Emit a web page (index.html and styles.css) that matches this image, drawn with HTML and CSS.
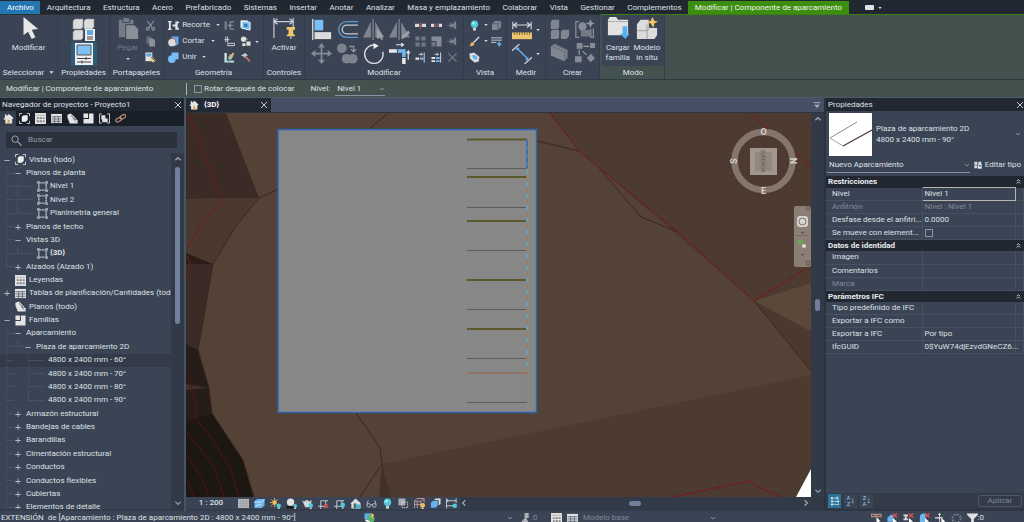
FILE: index.html
```html
<!DOCTYPE html>
<html lang="es">
<head>
<meta charset="utf-8">
<title>Proyecto1 - Vista 3D</title>
<link rel="stylesheet" href="styles.css">
</head>
<body>
<svg class="defs" aria-hidden="true">
  <defs>
    <symbol id="cursor" viewBox="0 0 24 24"><path d="M6 0v20l5-4 4 8 4-2-4-8 7-1z" fill="#e8e8e8"/></symbol>
    <symbol id="types" viewBox="0 0 24 24"><g fill="#dcdcdc" stroke="#8b8f96" stroke-width=".6"><path d="M1 3l2-2h8v8l-2 2H1zM12 3l2-2h8v8l-2 2h-8zM1 14l2-2h8v8l-2 2H1z"/></g><path d="M13 11h10v12H13z" fill="#eee"/><path d="M15 12h6v5h-6z" fill="#5fa9e6"/><path d="M15 19h6M15 21h6" stroke="#444"/></symbol>
    <symbol id="props" viewBox="0 0 24 24"><path d="M3 1h18v22H3z" fill="#f0f0f0"/><path d="M5 3h14v10H5z" fill="#7fc0f5" stroke="#555"/><path d="M5 16.500h14M5 20h14M14 15v3M10 18.500v3" stroke="#444" fill="none"/></symbol>
    <symbol id="paste" viewBox="0 0 24 24"><path d="M2 3h5V1h6v2h5v5h-9v14H2z" fill="#757c86"/><path d="M10 9h9l4 4v11H10z" fill="#8a9098"/><path d="M6 3v3h8V3" stroke="#3b4454" fill="none"/></symbol>
    <symbol id="cut" viewBox="0 0 24 24"><g fill="none" stroke="#8a9098" stroke-width="2.500"><path d="M5 2l11 15M19 2L8 17"/><circle cx="6" cy="19" r="3"/><circle cx="18" cy="19" r="3"/></g></symbol>
    <symbol id="copyc" viewBox="0 0 24 24"><path d="M3 1h9l3 3v13H3z" fill="#676e7a"/><path d="M9 6h9l4 4v13H9z" fill="#8a9098"/></symbol>
    <symbol id="match" viewBox="0 0 24 24"><path d="M1 1h15v19H1z" fill="#e4e4e4"/><path d="M3 3h11v7H3z" fill="#5fa9e6"/><path d="M8 17l8-6 7 7-4 5z" fill="#e8cf92"/><path d="M14 11l7 8" stroke="#444" stroke-width="2"/></symbol>
    <symbol id="cope" viewBox="0 0 24 24"><path d="M0 2h8v3H6v14h2v3H0v-3h2V5H0zM10 10h6V3h8v4h-3v10h3v4h-8v-7h-6z" fill="#e4e4e4"/></symbol>
    <symbol id="cutg" viewBox="0 0 24 24"><path d="M7 1h16v15l-6 6z" fill="#63aaf0"/><circle cx="9" cy="14" r="8.500" fill="#dcdcdc"/><path d="M3 8a8 8 0 0 1 14 7" stroke="#b24c4c" stroke-width="2" fill="none"/></symbol>
    <symbol id="join" viewBox="0 0 24 24"><path d="M8 1h15v15h-6a8.500 8.500 0 1 1-9-9z" fill="#76bdf6"/></symbol>
    <symbol id="wallj" viewBox="0 0 24 24"><path d="M1 3h6v18H1z" fill="#70777f"/><path d="M22 4h-8v16h8M20 12h-9m4-4l-5 4 5 4" fill="none" stroke="#858c95" stroke-width="2.500"/></symbol>
    <symbol id="beam" viewBox="0 0 24 24"><path d="M4 1v13m4-13v13M1 8h11M8 16h15v5H8z" stroke="#dadada" stroke-width="2" fill="none"/></symbol>
    <symbol id="splitf" viewBox="0 0 24 24"><path d="M1 1h16v16H1z" fill="#e7e7e7"/><path d="M4 2l18 3v17L4 18z" fill="#76bdf6" stroke="#fff" stroke-width="2"/><path d="M9 8h7v8l-7-2z" fill="#3775ab"/></symbol>
    <symbol id="shapes" viewBox="0 0 24 24"><circle cx="8" cy="7" r="6" fill="#dfdfdf"/><path d="M14 12h9v9h-9zM5 16h7v6H5z" fill="#dfdfdf"/><path d="M9 13l9-8" stroke="#999" stroke-width="2"/></symbol>
    <symbol id="paintw" viewBox="0 0 24 24"><path d="M1 2h5v17h16v4H1z" fill="#e0e0e0"/><path d="M8 13l6-9 7 4-7 11z" fill="#6fb8ef"/><path d="M12 15L21 2" stroke="#edb34e" stroke-width="4"/><path d="M4 17l9 5" stroke="#59c0cb" stroke-width="3"/></symbol>
    <symbol id="hammer" viewBox="0 0 24 24"><path d="M2 8l9-6 6 5-7 6-3-4z" fill="#c8cbd0"/><path d="M11 9l11 12" stroke="#ba7361" stroke-width="4"/></symbol>
    <symbol id="activate" viewBox="0 0 24 24"><path d="M1 1v22M22 1v10M1 5h21M5 2L1 5l4 3M18 2l4 3-4 3" stroke="#c9ced6" fill="none" stroke-width="1.300"/><path d="M15 11h9v3h-2v4l2 2v1h-9v-1l2-2v-4h-2z" fill="#f1c568"/><path d="M19.500 21v3" stroke="#eee"/></symbol>
    <symbol id="align" viewBox="0 0 24 24"><path d="M2 0v24" stroke="#ddd" stroke-width="1.500"/><path d="M4 1h10v12H4z" fill="#78c0f8"/><path d="M4 15h19v8H4z" fill="#dcdcdc"/></symbol>
    <symbol id="offset" viewBox="0 0 24 24"><path d="M24 3H11a9 9 0 0 0 0 18h13" fill="none" stroke="#589bd3" stroke-width="1.600"/><path d="M24 7H11a5 5 0 0 0 0 10h13" fill="none" stroke="#c7c9ce" stroke-width="1.600"/></symbol>
    <symbol id="mirror1" viewBox="0 0 24 24"><path d="M9 3v18H0zM14 3v18h10z" fill="#7e858e"/><path d="M11.500 0v24" stroke="#9da2aa"/><path d="M16 11v12l3-2 2 3 2-1-2-3h3z" fill="#9ca1a8"/></symbol>
    <symbol id="mirror2" viewBox="0 0 24 24"><path d="M9 3v18H0zM14 3v18h10z" fill="#7e858e"/><path d="M11.500 0v24" stroke="#9da2aa"/><path d="M14 23l1-4 7-6 2 3-7 6z" fill="#9ca1a8"/></symbol>
    <symbol id="move" viewBox="0 0 24 24"><path d="M12 0l4 5h-3v6h6V8l5 4-5 4v-3h-6v6h3l-4 5-4-5h3v-6H5v3l-5-4 5-4v3h6V5H8z" fill="#858c96"/></symbol>
    <symbol id="copym" viewBox="0 0 24 24"><g fill="#7c838d"><circle cx="5.500" cy="6" r="5.500"/><circle cx="11" cy="18" r="5.500"/><circle cx="18" cy="18" r="5.500"/></g><path d="M14 4h5v5m-3-2l3 3 3-3" stroke="#8d939c" stroke-width="1.500" fill="none"/></symbol>
    <symbol id="rotate" viewBox="0 0 24 24"><path d="M14 2.500A10.500 10.500 0 1 0 22.500 10" fill="none" stroke="#d8dbe0" stroke-width="1.600"/><path d="M12 0l6 3-6 4z" fill="#eee"/></symbol>
    <symbol id="trim" viewBox="0 0 24 24"><path d="M0 7h9v4H0zM15 17h4v7h-4z" fill="#e6e6e6"/><path d="M10 7h9v9h-4v-5h-5z" fill="#70b9f4"/><path d="M8 2h8m-2-2l2.500 2L14 4M22 19v-9m-2 2l2-3 2 3" stroke="#e5e5e5" fill="none" stroke-width="1.400"/></symbol>
    <symbol id="split1" viewBox="0 0 24 24"><path d="M0 8h9v7H0zM15 8h9v7h-9z" fill="#d5d8dc"/><path d="M12 4v16M9 12h6" stroke="#c75959" stroke-width="2"/></symbol>
    <symbol id="split2" viewBox="0 0 24 24"><path d="M0 8h7v7H0zM17 8h7v7h-7z" fill="#d5d8dc"/><path d="M9 7h2v9H9zM14 7h2v9h-2z" fill="#c75959"/></symbol>
    <symbol id="unpin" viewBox="0 0 24 24"><path d="M1 12h6M8 6v12M9 9h7V5l3-1v15l-3-1v-4H9z" stroke="#7f8690" stroke-width="2" fill="#7f8690"/></symbol>
    <symbol id="array" viewBox="0 0 24 24"><path d="M1 1h9v9H1zM14 1h9v9h-9zM1 14h9v9H1zM14 14h9v9h-9z" fill="#727984"/></symbol>
    <symbol id="scale" viewBox="0 0 24 24"><path d="M1 1h22v22H12V11H1z" fill="#858c96"/><path d="M1 13h9v10H1z" fill="#6e7580"/></symbol>
    <symbol id="ext1" viewBox="0 0 24 24"><path d="M1 12h8v5H1z" fill="#e4e4e4"/><path d="M11 12h7v5h-7z" fill="#70b9f4"/><path d="M20 1v22M8 5h8m-3-3l3 3-3 3" stroke="#dfe1e4" stroke-width="2" fill="none"/></symbol>
    <symbol id="ext2" viewBox="0 0 24 24"><path d="M1 11h8v4H1zM1 18h8v4H1z" fill="#e4e4e4"/><path d="M11 11h8v4h-8zM11 18h8v4h-8z" fill="#70b9f4"/><path d="M21 1v22M8 5h8m-3-3l3 3-3 3" stroke="#dfe1e4" stroke-width="2" fill="none"/></symbol>
    <symbol id="del" viewBox="0 0 24 24"><path d="M3 3l18 18M21 3L3 21" stroke="#727984" stroke-width="3"/></symbol>
    <symbol id="bulb" viewBox="0 0 24 24"><circle cx="12" cy="9" r="8" fill="#52cbd8"/><path d="M9 17h6v6H9z" fill="#d9dee3"/><circle cx="10" cy="7" r="3" fill="#a6eef4"/></symbol>
    <symbol id="cube" viewBox="0 0 24 24"><path d="M2 8l7-6h13v13l-7 7H2z" fill="#7f8690"/><path d="M2 8h13v14M15 8l7-6" stroke="#59616e" fill="none" stroke-width="2"/></symbol>
    <symbol id="brush" viewBox="0 0 24 24"><path d="M10 14L22 2" stroke="#dfe1e4" stroke-width="3"/><path d="M1 22c3-2 1-8 7-9l4 4c-2 5-6 6-11 5z" fill="#e3b45c"/></symbol>
    <symbol id="lines" viewBox="0 0 24 24"><path d="M0 4h24M0 9h24M0 14h12" stroke="#cdd1d6" stroke-width="2"/><path d="M18 12v8m-4-4l4 5 4-5" stroke="#65b3ef" stroke-width="3" fill="none"/></symbol>
    <symbol id="cut3" viewBox="0 0 24 24"><path d="M1 3l10-2 12 10-2 10-9 2L2 14z" fill="#d8dbde"/><path d="M6 7h9l4 9h-8z" fill="#5eb1f0"/></symbol>
    <symbol id="ruler" viewBox="0 0 24 24"><path d="M1 2v9M23 2v9M2 6h20M6 3L2 6l4 3M18 3l4 3-4 3" stroke="#d8dbe0" fill="none" stroke-width="1.300"/><path d="M0 15h24v8H0z" fill="#ecc56e"/><path d="M3 15v3m3-3v3m3-3v3m3-3v3m3-3v3m3-3v3m3-3v3" stroke="#6c5a34"/></symbol>
    <symbol id="dim" viewBox="0 0 24 24"><path d="M0 8l9-8M15 24l9-8" stroke="#c7cbd1" stroke-width="1.600"/><path d="M6 5l13 13" stroke="#68b4f2" stroke-width="1.600"/><path d="M4 3l5 2-3 3zM21 21l-5-2 3-3z" fill="#68b4f2"/></symbol>
    <symbol id="group" viewBox="0 0 24 24"><path d="M1 3l2-2h8v9l-2 2H1zM1 15l2-2h8v9l-2 2H1zM13 15l2-2h8v7l-3 4h-7z" fill="#7f8690"/></symbol>
    <symbol id="assem" viewBox="0 0 24 24"><path d="M5 3H1v19h4M19 12v10h3V11" stroke="#8a9099" stroke-width="1.500" fill="none"/><circle cx="9" cy="9" r="5" fill="#858c95"/><path d="M7 13h11v8H7z" fill="#747b85"/><path d="M19 0l1 4 4 1-4 2-1 4-2-4-4-2 4-1z" fill="#9298a1"/></symbol>
    <symbol id="parts" viewBox="0 0 24 24"><path d="M1 4l5-3 15 7v10l-4 4L1 15z" fill="#7f8690"/><path d="M3 4l15 7v10M6 2l15 7" stroke="#59616e" fill="none"/></symbol>
    <symbol id="simil" viewBox="0 0 24 24"><path d="M2 0h7v7H2zM18 0h6v6h-6zM0 16h8v7H0zM19 13l5 5-5 5-5-5z" fill="#858c95"/><path d="M10 4h7M5 8v6M9 10l5 4" stroke="#9aa0a8" stroke-width="1.400"/></symbol>
    <symbol id="load" viewBox="0 0 24 24"><path d="M1 3l2-3h7l2 3h11v17H1z" fill="#e2e2e2"/><path d="M1 5h22" stroke="#a7a7a7"/><path d="M17 10h5v8h3l-5 6-6-6h3z" fill="#58b0ef"/></symbol>
    <symbol id="insitu" viewBox="0 0 24 24"><path d="M1 8l4-5h9v9h9v8l-3 4H1z" fill="#dcdcdc"/><path d="M1 15h11v9M12 8v7l4-4" stroke="#999" fill="none"/><path d="M18 0l2 4 4 1-4 2-1 5-3-5-4-1 4-2z" fill="#f3c46a"/></symbol>
    <symbol id="house" viewBox="0 0 24 24"><path d="M1 13L13 2l10 9-2 2-1-1v11H5V13l-2 2zM4 3h4v5l-4 3z" fill="#e4e4e4"/><path d="M10 15h5v8h-5z" fill="#d9a751"/></symbol>
    <symbol id="view3" viewBox="0 0 24 24"><path d="M1 7V1h6M17 1h6v6M23 17v6h-6M7 23H1v-6" stroke="#cfd3d8" stroke-width="2" fill="none"/><path d="M6 8l4-3h9v10l-4 4H6z" fill="#eee"/></symbol>
    <symbol id="legend" viewBox="0 0 24 24"><path d="M0 0h24v24H0z" fill="#e1e1e1"/><path d="M1 5h22" stroke="#888"/><path d="M4 9h4v4H4zM10 9h5v4h-5zM17 9h4v4h-4zM4 16h4v4H4zM10 16h5v4h-5zM17 16h4v4h-4z" fill="#858585"/></symbol>
    <symbol id="sched" viewBox="0 0 24 24"><path d="M0 2h24v20H0z" fill="#e1e1e1"/><path d="M1 8h22M1 13h22M1 18h22M8 8v14M16 8v14" stroke="#454c58" stroke-width="1.600"/></symbol>
    <symbol id="sheet" viewBox="0 0 24 24"><path d="M1 10V4l7-3 7 6 8 9v7H6z" fill="#e4e4e4"/><path d="M9 5l10 14M16 6v8h6" stroke="#505763" stroke-width="1.500" fill="none"/></symbol>
    <symbol id="family" viewBox="0 0 24 24"><path d="M1 1h10v10H1zM13 1h10v22H1V13h12z" fill="#e4e4e4"/></symbol>
    <symbol id="grp" viewBox="0 0 24 24"><path d="M6 2H1v20h5M18 2h5v20h-5" stroke="#ddd" stroke-width="2" fill="none"/><path d="M5 5h9v7h5v8H7v-6H5z" fill="#dedede"/></symbol>
    <symbol id="link" viewBox="0 0 24 24"><g fill="none" stroke="#c09079" stroke-width="2.500"><rect x="1" y="11" width="13" height="7" rx="3.500" transform="rotate(-30 8 14)"/><rect x="11" y="5" width="13" height="7" rx="3.500" transform="rotate(-30 17 9)"/></g></symbol>
    <symbol id="plan" viewBox="0 0 24 24"><path d="M4 4h16v16H4z" fill="none" stroke="#b9bec6" stroke-width="3" stroke-dasharray="5 1"/><path d="M0 0h6v6H0zM18 0h6v6h-6zM0 18h6v6H0zM18 18h6v6h-6z" fill="#969da8"/></symbol>
    <symbol id="search" viewBox="0 0 24 24"><circle cx="9" cy="9" r="7" fill="none" stroke="#a9afb9" stroke-width="2"/><path d="M14 14l9 9" stroke="#a9afb9" stroke-width="2.500"/></symbol>
    <symbol id="x" viewBox="0 0 24 24"><path d="M3 3l18 18M21 3L3 21" stroke="#c3c8d0" stroke-width="3"/></symbol>
    <symbol id="up" viewBox="0 0 24 24"><path d="M4 16l8-8 8 8" fill="none" stroke="#9aa3b1" stroke-width="4"/></symbol>
    <symbol id="fold" viewBox="0 0 24 24"><path d="M4 11l8-8 8 8M4 22l8-8 8 8" fill="none" stroke="#dfe2e6" stroke-width="4"/></symbol>
    <symbol id="down" viewBox="0 0 24 24"><path d="M4 8l8 8 8-8" fill="none" stroke="#8791a0" stroke-width="4"/></symbol>
    <symbol id="left" viewBox="0 0 24 24"><path d="M16 4l-8 8 8 8" fill="none" stroke="#9aa3b1" stroke-width="4"/></symbol>
    <symbol id="right" viewBox="0 0 24 24"><path d="M8 4l8 8-8 8" fill="none" stroke="#9aa3b1" stroke-width="4"/></symbol>
    <symbol id="tri" viewBox="0 0 24 24"><path d="M2 6h20L12 18z" fill="#dfe2e6"/></symbol>
    <symbol id="tabs" viewBox="0 0 24 24"><path d="M2 5h20" stroke="#a5aebd" stroke-width="3"/><path d="M3 11h18l-9 10z" fill="#a5aebd"/></symbol>
    <symbol id="fine" viewBox="0 0 24 24"><path d="M0 2h24v20H0z" fill="#b5b7ba"/><path d="M0 7h24M0 12h24M0 17h24M6 2v20M12 2v20M18 2v20" stroke="#8f9296"/></symbol>
    <symbol id="style" viewBox="0 0 24 24"><path d="M1 7l6-5h16v14l-6 6H1z" fill="#6ab5ee"/><path d="M1 9h15l7-6M3 17l13-3" stroke="#d6effd" stroke-width="2" fill="none"/></symbol>
    <symbol id="sun" viewBox="0 0 24 24"><circle cx="10" cy="10" r="5" fill="#f2c15e"/><path d="M10 0v4M10 16v4M0 10h4M3 3l3 3M17 3l-3 3M3 17l3-3" stroke="#f2c15e" stroke-width="2"/><circle cx="19" cy="17" r="5" fill="#52cbd8"/><path d="M17 21h4v3h-4z" fill="#ddd"/></symbol>
    <symbol id="shadow" viewBox="0 0 24 24"><path d="M1 18h17v5H1z" fill="#15181c"/><circle cx="10" cy="9" r="8" fill="#e2e2e2"/><circle cx="20" cy="17" r="4" fill="#52cbd8"/><path d="M18 21h4v3h-4z" fill="#ddd"/></symbol>
    <symbol id="teapot" viewBox="0 0 24 24"><path d="M0 5l5 3c2-4 9-4 11 0l5-4-2 12-4 4H7L4 13z" fill="#d3d6da"/><circle cx="19" cy="16" r="5" fill="#52cbd8"/><path d="M17 21h4v3h-4z" fill="#ddd"/></symbol>
    <symbol id="cropx" viewBox="0 0 24 24"><path d="M0 18h17V6M6 24V6h16" stroke="#cfd3d8" stroke-width="2" fill="none"/><path d="M14 14l8 8m0-8l-8 8" stroke="#d94c4c" stroke-width="3"/></symbol>
    <symbol id="cropb" viewBox="0 0 24 24"><path d="M0 18h17V6M6 24V6h16" stroke="#cfd3d8" stroke-width="2" fill="none"/><circle cx="19" cy="15" r="5" fill="#52cbd8"/><path d="M17 20h4v3h-4z" fill="#ddd"/></symbol>
    <symbol id="lock3" viewBox="0 0 24 24"><path d="M1 12L12 1l11 10v12H3V13z" fill="#dadcdf"/><path d="M8 12h6v10H8z" fill="#555"/><path d="M12 14h10v9H12z" fill="#48b5cb"/></symbol>
    <symbol id="glasses" viewBox="0 0 24 24"><path d="M2 14l3-9M22 14l-3-9M10 15h4" stroke="#bbc0c8" stroke-width="2"/><circle cx="6" cy="16" r="4" fill="none" stroke="#bbc0c8" stroke-width="2"/><circle cx="18" cy="16" r="4" fill="none" stroke="#bbc0c8" stroke-width="2"/></symbol>
    <symbol id="temp" viewBox="0 0 24 24"><path d="M1 1h15v15H1z" fill="#a9adb3"/><path d="M9 9h12v12H9z" fill="none" stroke="#e0e0e0" stroke-width="2" stroke-dasharray="3 2"/></symbol>
    <symbol id="analyt" viewBox="0 0 24 24"><path d="M1 22V7l6-6h15v9M1 7h14v15M1 14h14M7 7v15M15 7l7-6" stroke="#cb9d98" stroke-width="2" fill="none"/><circle cx="19" cy="16" r="5" fill="#f2c15e"/><path d="M17 21h4v3h-4z" fill="#ddd"/></symbol>
    <symbol id="disp" viewBox="0 0 24 24"><path d="M9 4l3-3h11v12l-4 3V5z" fill="#dfe2e5"/><path d="M2 10l5-4h10v10l-5 5H2z" fill="#68b2f0"/></symbol>
    <symbol id="reveal" viewBox="0 0 24 24"><path d="M1 1v22M22 1v10M1 6h21M1 17h15M5 3L1 6l4 3" stroke="#d2d5da" stroke-width="2" fill="none"/><circle cx="19" cy="17" r="5" fill="#52cbd8"/></symbol>
    <symbol id="work" viewBox="0 0 24 24"><path d="M1 1h12v12H1z" fill="#5fb1ed"/><circle cx="15" cy="13" r="8" fill="#5cb667"/><path d="M13 0l9 3-4 9z" fill="#edc16b"/><path d="M3 15l9 5" stroke="#eee" stroke-width="4"/></symbol>
    <symbol id="users" viewBox="0 0 24 24"><path d="M10 0h9v11h-5l6 13H0l8-11h2z" fill="#abb0b8"/></symbol>
    <symbol id="selx" viewBox="0 0 24 24"><path d="M1 10l8-7 5 3v13H1z" fill="#69b7f0"/><path d="M13 1l9 9m0-9l-9 9" stroke="#dc5050" stroke-width="3"/><path d="M13 11v12l3-3 3 4 2-2-3-3h4z" fill="#fff"/></symbol>
    <symbol id="pinx" viewBox="0 0 24 24"><path d="M1 3h10v4H8v5h3v4H1v-4h3V7H1z" fill="#dcdcdc"/><path d="M13 1l9 9m0-9l-9 9" stroke="#dc5050" stroke-width="3"/><path d="M13 11v12l3-3 3 4 2-2-3-3h4z" fill="#fff"/></symbol>
    <symbol id="facex" viewBox="0 0 24 24"><path d="M2 5l6-4h6v18l-5 5H2z" fill="#69b7f0"/><path d="M14 1l9 9m0-9l-9 9" stroke="#dc5050" stroke-width="3"/><path d="M13 11v12l3-3 3 4 2-2-3-3h4z" fill="#fff"/></symbol>
    <symbol id="linksel" viewBox="0 0 24 24"><path d="M1 3h9v5H1zM13 3h9v5h-9zM8 5h7" stroke="#bd8775" stroke-width="2.500" fill="none"/><path d="M12 9v13l3-3 3 4 2-2-3-3h4z" fill="#fff"/></symbol>
    <symbol id="drag" viewBox="0 0 24 24"><path d="M10 0l4 4h-3v5h6v3h-6v7H9v-7H0V9h9V4H6z" fill="#e4e4e4"/><path d="M14 11v12l3-3 3 4 2-2-3-3h4z" fill="#fff"/></symbol>
    <symbol id="busy" viewBox="0 0 24 24"><circle cx="12" cy="12" r="9" stroke="#77808e" stroke-width="4" stroke-dasharray="4 3" fill="none"/></symbol>
    <symbol id="filter" viewBox="0 0 24 24"><path d="M0 1h24v3l-9 9v11H9V13L0 4z" fill="#dfe1e4"/></symbol>
    <symbol id="editt" viewBox="0 0 24 24"><path d="M1 2h9v9H1zM13 2h9v9h-9zM1 13h9v9H1z" fill="#d9dbde"/><path d="M12 10h11v13H12z" fill="#f1f1f1"/><path d="M14 12h7v5h-7z" fill="#4a7fb0"/></symbol>
    <symbol id="sortg" viewBox="0 0 24 24"><path d="M2 3h6v5H2zM2 11h6v4H2zM2 18h6v4H2z" fill="#d9ecf6"/><path d="M10 5h12M10 13h12M10 20h12M17 1v8M20 9v8" stroke="#d9ecf6" stroke-width="2"/></symbol>
  </defs>
</svg>

<div class="app">
<nav class="tabs">
  <button class="file">Archivo</button>
  <div class="set"><button>Arquitectura</button><button>Estructura</button><button>Acero</button><button>Prefabricado</button><button>Sistemas</button><button>Insertar</button><button>Anotar</button><button>Analizar</button><button>Masa y emplazamiento</button><button>Colaborar</button><button>Vista</button><button>Gestionar</button><button>Complementos</button></div>
  <button class="context">Modificar | Componente de aparcamiento</button>
  <button class="mini" aria-label="Opciones de cinta"><span class="pill"></span><svg class="s4"><use href="#tri"/></svg></button>
</nav>

<section class="ribbon">
  <div class="panel p-sel"><div class="body"><button class="big"><svg class="s22"><use href="#cursor"/></svg>Modificar</button></div><h2>Seleccionar <svg class="s5"><use href="#tri"/></svg></h2></div>
  <div class="panel p-prop"><div class="body col"><button aria-label="Propiedades de tipo"><svg class="s24"><use href="#types"/></svg></button><button class="on" aria-label="Propiedades"><svg class="s24"><use href="#props"/></svg></button></div><h2>Propiedades</h2></div>
  <div class="panel p-clip"><div class="body"><button class="big dim"><svg class="s22"><use href="#paste"/></svg>Pegar<svg class="s4"><use href="#tri"/></svg></button>
    <div class="g3"><button aria-label="Cortar al portapapeles"><svg><use href="#cut"/></svg></button><button aria-label="Copiar"><svg><use href="#copyc"/></svg></button><button aria-label="Igualar tipo"><svg><use href="#match"/></svg></button></div></div><h2>Portapapeles</h2></div>
  <div class="panel p-geo"><div class="body">
    <div class="g3 text"><button><svg><use href="#cope"/></svg>Recorte<svg class="s4"><use href="#tri"/></svg></button><button><svg><use href="#cutg"/></svg>Cortar<svg class="s4"><use href="#tri"/></svg></button><button><svg><use href="#join"/></svg>Unir<svg class="s4"><use href="#tri"/></svg></button></div>
    <div class="g3"><button aria-label="Uniones de muro"><svg><use href="#wallj"/></svg></button><button aria-label="Uniones de viga"><svg><use href="#beam"/></svg></button><button aria-label="Pintar"><svg><use href="#paintw"/></svg></button></div>
    <div class="g3"><button aria-label="Dividir cara"><svg><use href="#splitf"/></svg></button><button aria-label="Formas"><svg><use href="#shapes"/></svg></button><button aria-label="Demoler"><svg><use href="#hammer"/></svg></button></div><svg class="s4"><use href="#tri"/></svg></div><h2>Geometría</h2></div>
  <div class="panel p-ctl"><div class="body"><button class="big"><svg class="s22"><use href="#activate"/></svg>Activar</button></div><h2>Controles</h2></div>
  <div class="panel p-mod"><div class="body">
    <div class="g4"><button aria-label="Alinear"><svg><use href="#align"/></svg></button><button aria-label="Desfase"><svg><use href="#offset"/></svg></button><button aria-label="Reflejar por eje"><svg><use href="#mirror1"/></svg></button><button aria-label="Reflejar dibujando"><svg><use href="#mirror2"/></svg></button><button aria-label="Desplazar"><svg><use href="#move"/></svg></button><button aria-label="Copiar elementos"><svg><use href="#copym"/></svg></button><button aria-label="Rotar"><svg><use href="#rotate"/></svg></button><button aria-label="Recortar esquina"><svg><use href="#trim"/></svg></button></div>
    <div class="g3x3"><button aria-label="Dividir"><svg><use href="#split1"/></svg></button><button aria-label="Dividir con separación"><svg><use href="#split2"/></svg></button><button aria-label="Desbloquear"><svg><use href="#unpin"/></svg></button><button aria-label="Matriz"><svg><use href="#array"/></svg></button><button aria-label="Escala"><svg><use href="#scale"/></svg></button><button aria-label="Bloquear"><svg><use href="#unpin"/></svg></button><button aria-label="Alargar uno"><svg><use href="#ext1"/></svg></button><button aria-label="Alargar varios"><svg><use href="#ext2"/></svg></button><button aria-label="Suprimir"><svg><use href="#del"/></svg></button></div></div><h2>Modificar</h2></div>
  <div class="panel p-view"><div class="body">
    <div class="g3 arrows"><button aria-label="Ocultar"><svg><use href="#bulb"/></svg><svg class="s4"><use href="#tri"/></svg></button><button aria-label="Modificar gráficos"><svg><use href="#brush"/></svg><svg class="s4"><use href="#tri"/></svg></button><button aria-label="Caja de selección"><svg><use href="#cut3"/></svg></button></div>
    <div class="g3"><button aria-label="Desplazar vista"><svg><use href="#cube"/></svg></button><button aria-label="Modelado de líneas"><svg><use href="#lines"/></svg></button></div></div><h2>Vista</h2></div>
  <div class="panel p-med"><div class="body g2"><button aria-label="Medir"><svg class="s20"><use href="#ruler"/></svg><svg class="s4"><use href="#tri"/></svg></button><button aria-label="Cota"><svg class="s20"><use href="#dim"/></svg><svg class="s4"><use href="#tri"/></svg></button></div><h2>Medir</h2></div>
  <div class="panel p-crear"><div class="body gq"><button aria-label="Crear grupo"><svg class="s20"><use href="#group"/></svg></button><button aria-label="Crear montaje"><svg class="s20"><use href="#assem"/></svg></button><button aria-label="Crear piezas"><svg class="s20"><use href="#parts"/></svg></button><button aria-label="Crear similar"><svg class="s20"><use href="#simil"/></svg></button></div><h2>Crear</h2></div>
  <div class="panel p-modo"><div class="body"><button class="big"><svg class="s22"><use href="#load"/></svg><span>Cargar<br>familia</span></button><button class="big"><svg class="s22"><use href="#insitu"/></svg><span>Modelo<br>in situ</span></button></div><h2>Modo</h2></div>
  <div class="rest"></div>
</section>

<section class="options">
  <span class="mode">Modificar | Componente de aparcamiento</span>
  <label class="check"><input type="checkbox">Rotar después de colocar</label>
  <label class="level">Nivel: <span class="pick"><select><option>Nivel 1</option></select><svg class="s6"><use href="#down"/></svg></span></label>
</section>

<main>
<aside class="browser">
  <header><h1>Navegador de proyectos - Proyecto1</h1><button aria-label="Cerrar navegador"><svg class="s8"><use href="#x"/></svg></button></header>
  <div class="tools"><button class="sel" aria-label="Inicio"><svg><use href="#house"/></svg></button><button aria-label="Vistas"><svg><use href="#view3"/></svg></button><button aria-label="Leyendas"><svg><use href="#legend"/></svg></button><button aria-label="Tablas"><svg><use href="#sched"/></svg></button><button aria-label="Planos"><svg><use href="#sheet"/></svg></button><button aria-label="Familias"><svg><use href="#family"/></svg></button><button aria-label="Grupos"><svg><use href="#grp"/></svg></button><button aria-label="Vínculos"><svg><use href="#link"/></svg></button></div>
  <label class="search"><svg><use href="#search"/></svg><input type="text" placeholder="Buscar" aria-label="Buscar"></label>
  <div class="treebox">
    <ul class="tree">
      <li class="root"><b>−</b><svg><use href="#view3"/></svg>Vistas (todo)</li>
      <li><i></i><b>−</b>Planos de planta</li>
      <li><i></i><i class="in"></i><svg><use href="#plan"/></svg>Nivel 1</li>
      <li><i></i><i class="in"></i><svg><use href="#plan"/></svg>Nivel 2</li>
      <li><i></i><i class="in end"></i><svg><use href="#plan"/></svg>Planimetría general</li>
      <li><i></i><b>+</b>Planos de techo</li>
      <li><i></i><b>−</b>Vistas 3D</li>
      <li><i></i><i class="in end"></i><svg><use href="#plan"/></svg><strong>{3D}</strong></li>
      <li><i class="end"></i><b>+</b>Alzados (Alzado 1)</li>
      <li class="root"><b></b><svg><use href="#legend"/></svg>Leyendas</li>
      <li class="root"><b>+</b><svg><use href="#sched"/></svg>Tablas de planificación/Cantidades (todo)</li>
      <li class="root"><b></b><svg><use href="#sheet"/></svg>Planos (todo)</li>
      <li class="root"><b>−</b><svg><use href="#family"/></svg>Familias</li>
      <li><i></i><b>−</b>Aparcamiento</li>
      <li><i></i><i class="sub end"></i><b>−</b>Plaza de aparcamiento 2D</li>
      <li class="hot"><i></i><i class="deep"></i>4800 x 2400 mm - 60°</li>
      <li><i></i><i class="deep"></i>4800 x 2400 mm - 70°</li>
      <li><i></i><i class="deep"></i>4800 x 2400 mm - 80°</li>
      <li><i></i><i class="deep end"></i>4800 x 2400 mm - 90°</li>
      <li><i></i><b>+</b>Armazón estructural</li>
      <li><i></i><b>+</b>Bandejas de cables</li>
      <li><i></i><b>+</b>Barandillas</li>
      <li><i></i><b>+</b>Cimentación estructural</li>
      <li><i></i><b>+</b>Conductos</li>
      <li><i></i><b>+</b>Conductos flexibles</li>
      <li><i></i><b>+</b>Cubiertas</li>
      <li><i></i><b>+</b>Elementos de detalle</li>
    </ul>
    <div class="vbar"><svg class="s8"><use href="#up"/></svg><div class="track"><span></span></div><svg class="s8"><use href="#down"/></svg></div>
  </div>
</aside>

<section class="view">
  <header><button class="doc"><svg class="s10"><use href="#house"/></svg><strong>{3D}</strong><svg class="s8 close"><use href="#x"/></svg></button><svg class="s8"><use href="#tabs"/></svg></header>
  <div class="stage">
    <svg class="scene" viewBox="186 113 625 384" preserveAspectRatio="xMidYMid slice">
      <defs><pattern id="dots" width="4" height="4" patternUnits="userSpaceOnUse"><path d="M0 0h1v1H0zM2 2h1v1H2z" fill="#604c36"/></pattern></defs>
      <path d="M180 113h640v384H180z" fill="#534235"/>
      <path d="M186 113h40l33 85-73 1z" fill="#3b2b26"/>
      <path d="M186 199l73-1-23 28-23 38-27-11z" fill="#4b392f"/>
      <path d="M186 253l27 11h-27z" fill="#2a1d19"/>
      <path d="M186 264h27l-15 86-12-5z" fill="#3b2b26"/>
      <path d="M186 345l12 5 11 38 3 25 31 47 11 37h-68z" fill="#1d1712"/>
      <path d="M186 345l12 5 11 38 3 25-26 9z" fill="#261c18"/>
      <path d="M186 384l23 4-23 2z" fill="#3f3029"/>
      <path d="M550 113l29 38 175 150 58-18V113z" fill="#4c3930"/>
      <path d="M550 113l29 38 175 150 58-18V113z" fill="url(#dots)" opacity=".35"/>
      <path d="M754 301l58-18v49z" fill="#5c473b"/><path d="M754 301l58 31v40z" fill="#4b392f"/>
      <path d="M382 464l430-89v122H391z" fill="#4c3a31"/><path d="M382 464l430-89v122H391z" fill="url(#dots)" opacity=".4"/>
      <path d="M382 464l9 33h-12z" fill="#403129"/><path d="M812 467v30h-16z" fill="#fff"/>
      <g fill="none" stroke="#40251f" stroke-width="1"><path d="M388 113l-19 16M278 189l-19 9-23 28-23 38-15 86 11 38 3 25 31 47 11 37M356 413l24 35 2 16-22 33M537 141l5 1 37 9M598 167l43 50 37 15M754 301l58 71"/></g>
      <g fill="none" stroke="#741a17" stroke-width="1"><path d="M188 113l34 87-20 24-15 25M187 256l3 7-3 17M550 113l29 38 19 16 80 65 76 69 58-36M750 113l62 55M672 497l78-16 10 7 22 9"/></g>
      <g fill="none" stroke="#59110e" stroke-width="1"><path d="M187 371l4 14 4 17 1 17 17 21 17 28 9 29M187 432l26 33 11 32M187 455l16 25 6 17M187 480l7 17"/></g>
      <path d="M278 129.500h258.500v283H278z" fill="#878787" stroke="#2e65b2" stroke-width="1.500"/>
      <g stroke-width="2" stroke="#5c5a2b"><path d="M467 139.500h60M467 177h60M467 221h60M467 280h60M467 329h60"/></g>
      <g stroke="#5c5c5c"><path d="M467 168.500h60M467 207.500h60M467 250.500h60M467 309.500h60M467 358.500h60M467 402.500h60"/></g>
      <path d="M467 373h60" stroke="#8f7567" stroke-width="2"/>
      <path d="M527 140v28" stroke="#3e70c0" stroke-width="2" stroke-dasharray="7 1"/><path d="M527 170v202" stroke="#739dab" stroke-width="2" stroke-dasharray="4 8"/><path d="M527 176v196" stroke="#98806a" stroke-width="2" stroke-dasharray="4 8"/><path d="M527 374v28" stroke="#92806f"/>
      <circle cx="763.500" cy="161" r="29" fill="none" stroke="#85766c" stroke-width="6.500"/>
      <path d="M750 148h27v27h-27z" fill="#a2978f"/><path d="M755 152h17v19h-17z" fill="#92877f"/>
      <g class="compass"><text x="763.500" y="135">O</text><text transform="translate(790 161) rotate(90)">N</text><text transform="translate(763.500 194)">E</text><text transform="translate(730 161) rotate(90)">S</text></g>
      <text class="top" transform="translate(761 161) rotate(90)">SUPERIOR</text>
      <rect x="794" y="206" width="17" height="61" rx="2" fill="#8b7e75"/><path d="M796 235.500h13" stroke="#746860"/>
      <rect x="797" y="216" width="11" height="11" rx="3" fill="#d8d5d2"/><circle cx="802.500" cy="221.500" r="3.500" fill="none" stroke="#77706b"/><path d="M798 240h5v5h-5z" fill="#6f9f58"/><circle cx="804" cy="246" r="2" fill="#ddd"/><path d="M801 232h3l-1.500 2zM801 254h3l-1.500 2z" fill="#544b45"/><circle cx="808" cy="208" r="2" fill="none" stroke="#554b45" stroke-width=".8"/><circle cx="808" cy="263" r="2" fill="none" stroke="#554b45" stroke-width=".8"/>
    </svg>
    <div class="vbar"><svg class="s8"><use href="#up"/></svg><div class="track"><span></span></div><svg class="s8"><use href="#down"/></svg></div>
  </div>
  <footer><button class="scale">1 : 200</button><div class="vc"><svg><use href="#fine"/></svg><svg><use href="#style"/></svg><svg><use href="#sun"/></svg><svg><use href="#shadow"/></svg><svg><use href="#teapot"/></svg><svg><use href="#cropx"/></svg><svg><use href="#cropb"/></svg><svg><use href="#lock3"/></svg><svg><use href="#glasses"/></svg><svg><use href="#bulb"/></svg><svg><use href="#temp"/></svg><svg><use href="#analyt"/></svg><svg><use href="#disp"/></svg><svg><use href="#reveal"/></svg></div><div class="hbar"><svg class="s8"><use href="#left"/></svg><div class="track"><span></span></div><svg class="s8"><use href="#right"/></svg></div></footer>
</section>

<aside class="props">
  <header><h1>Propiedades</h1><button aria-label="Cerrar propiedades"><svg class="s8"><use href="#x"/></svg></button></header>
  <div class="type"><svg class="thumb" viewBox="0 0 43 43"><path d="M0 0h43v43H0z" fill="#fff"/><path d="M28 9L1 25" stroke="#888" fill="none"/><path d="M1 25l13 8" stroke="#b3a08c" fill="none"/><path d="M14 33l29-16" stroke="#54413a" stroke-width="1.300"/></svg><p>Plaza de aparcamiento 2D<br>4800 x 2400 mm - 90°</p><svg class="s6"><use href="#down"/></svg></div>
  <div class="inst"><span class="pick"><select aria-label="Instancia"><option>Nuevo Aparcamiento</option></select><svg class="s6"><use href="#down"/></svg></span><button><svg class="s8"><use href="#editt"/></svg>Editar tipo</button></div>
  <table>
    <colgroup><col class="c-name"><col><col class="c-btn"></colgroup>
    <tr class="h"><th colspan="2">Restricciones</th><td><svg class="s5"><use href="#fold"/></svg></td></tr>
    <tr><th>Nivel</th><td class="edit">Nivel 1</td><td></td></tr>
    <tr class="off"><th>Anfitrión</th><td>Nivel : Nivel 1</td><td></td></tr>
    <tr><th>Desfase desde el anfitri...</th><td>0.0000</td><td></td></tr>
    <tr><th>Se mueve con element...</th><td><input type="checkbox" aria-label="Se mueve con elementos cercanos"></td><td></td></tr>
    <tr class="h"><th colspan="2">Datos de identidad</th><td><svg class="s5"><use href="#fold"/></svg></td></tr>
    <tr><th>Imagen</th><td></td><td></td></tr>
    <tr><th>Comentarios</th><td></td><td></td></tr>
    <tr class="off"><th>Marca</th><td></td><td></td></tr>
    <tr class="h"><th colspan="2">Parámetros IFC</th><td><svg class="s5"><use href="#fold"/></svg></td></tr>
    <tr><th>Tipo predefinido de IFC</th><td></td><td></td></tr>
    <tr><th>Exportar a IFC como</th><td></td><td></td></tr>
    <tr><th>Exportar a IFC</th><td>Por tipo</td><td></td></tr>
    <tr><th>IfcGUID</th><td>0$YuW74djEzvdGNeCZ6...</td><td></td></tr>
  </table>
  <footer><button class="sort on" aria-label="Agrupar"><svg class="s10"><use href="#sortg"/></svg></button><button class="sort" aria-label="Orden ascendente"><span>A<br>Z</span>↓</button><button class="sort" aria-label="Orden descendente"><span>Z<br>A</span>↓</button><button class="apply" disabled>Aplicar</button></footer>
</aside>
</main>

<footer class="status">
  <span class="msg">EXTENSIÓN&nbsp; de [Aparcamiento : Plaza de aparcamiento 2D : 4800 x 2400 mm - 90°]</span>
  <div class="sets"><svg class="work"><use href="#work"/></svg><svg class="s6"><use href="#down"/></svg><span class="cnt"><svg><use href="#users"/></svg>:0</span><svg><use href="#legend"/></svg><svg><use href="#sched"/></svg><span class="base">Modelo base</span><svg class="s6"><use href="#down"/></svg></div>
  <div class="picks"><svg><use href="#linksel"/></svg><svg><use href="#selx"/></svg><svg><use href="#pinx"/></svg><svg><use href="#facex"/></svg><svg><use href="#drag"/></svg><svg><use href="#busy"/></svg><span class="cnt"><svg><use href="#filter"/></svg>:0</span></div>
</footer>
</div>
</body>
</html>
```
FILE: styles.css
```css
* { box-sizing: border-box; }
body {
  margin: 0;
  font: 8px/12px Roboto, "Open Sans", sans-serif;
  color: #dde1e6;
  background: #3b4454;
}
button, input, select { font: inherit; color: inherit; background: none; border: 0; padding: 0; margin: 0; }
select { appearance: none; outline: 0; }
h1, h2, p, ul { margin: 0; padding: 0; font: inherit; }
ul { list-style: none; }
svg { display: block; flex: none; width: 11px; height: 11px; }
.defs { position: absolute; width: 0; height: 0; }
.s4 { width: 4px; height: 4px; }
.s5 { width: 5px; height: 5px; }
.s6 { width: 6px; height: 6px; }
.s8 { width: 8px; height: 8px; }
.s10 { width: 10px; height: 10px; }
.s20 { width: 20px; height: 20px; }
.s22 { width: 22px; height: 22px; }
.s24 { width: 24px; height: 24px; }
.app { display: flex; flex-direction: column; height: 100vh; overflow: hidden; }

.tabs { display: flex; flex: none; height: 14px; background: #212832; padding-top: 1px; white-space: nowrap; }
.tabs .set { display: flex; justify-content: space-between; width: 648px; padding: 0 6px 0 7px; }
.tabs .file { background: #2476b3; color: #fff; padding: 0 6px 0 7px; }
.tabs .context { background: #3c8f0e; color: #f1f5ee; padding: 0 7px; }
.tabs .mini { display: flex; align-items: center; gap: 4px; padding-left: 16px; }
.pill { width: 9px; height: 5px; border-radius: 1px; background: #dfe2e6; }

.ribbon { display: flex; flex: none; height: 66px; background: #43514f; border-bottom: 1px solid #2f3944; }
.rest { flex: 1; border-top: 1px solid #39800f; }
.panel { display: flex; flex-direction: column; flex: none; background: #3b4454; border-right: 1px solid #343d4b; border-top: 1px solid #2a332f; }
.panel .body { display: flex; justify-content: center; flex: 1; padding-top: 2px; }
.panel h2 { display: flex; justify-content: center; align-items: center; gap: 5px; height: 13px; line-height: 12px; white-space: nowrap; }
.panel button { display: flex; align-items: center; justify-content: center; }
.panel .big { flex-direction: column; justify-content: flex-start; gap: 4px; line-height: 10px; }
.dim { color: #737b87; }
.p-sel { width: 58px; }
.p-prop { width: 52px; }
.p-clip { width: 54px; }
.p-geo { width: 100px; }
.p-ctl { width: 41px; }
.p-mod { width: 159px; }
.p-view { width: 43px; }
.p-med { width: 39px; }
.p-crear { width: 54px; }
.panel.p-modo { width: 65px; border-left: 2px solid #43514f; border-top-color: #39800f; }
.p-modo .body { justify-content: space-evenly; }
.p-modo h2 { background: #43514f; }
.body.col { flex-direction: column; align-items: center; }
.panel .on { background: #2d5c78; width: 26px; }
.g3, .g3x3 { display: grid; grid-template-rows: repeat(3, 16px); align-items: center; }
.p-clip .body, .p-geo .body { justify-content: space-evenly; }
.g3.text { width: 52px; }
.g3.text button { justify-content: flex-start; gap: 3px; }
.g3.text .s4 { margin-left: 3px; }
.p-geo .body > .s4 { align-self: center; }
.g4 { display: grid; grid-template-columns: repeat(4, 26px); grid-template-rows: 24px 24px; }
.g4 svg { width: 21px; height: 21px; }
.g3x3 { grid-template-columns: repeat(3, 16px); }
.g3x3 svg { width: 11px; height: 11px; }
.arrows { width: 22px; }
.arrows button { justify-content: flex-start; gap: 4px; }
.g2 { flex-direction: column; align-items: center; }
.g2 button { gap: 4px; height: 24px; }
.panel .gq { display: grid; grid-template-columns: 25px 25px; grid-template-rows: 24px 24px; }

.options { display: flex; align-items: center; flex: none; height: 18px; background: #43514f; border-bottom: 1px solid #4a5a66; white-space: nowrap; }
.mode { width: 187px; padding-left: 6px; border-right: 1px solid #aab2b4; }
.check { display: flex; align-items: center; padding-left: 7px; gap: 2px; }
input[type="checkbox"] { appearance: none; width: 8px; height: 8px; border: 1px solid #8b949f; }
.level { display: flex; align-items: center; gap: 5px; margin-left: 16px; }
.pick { display: flex; align-items: center; border-bottom: 1px solid #8693a2; }
.level .pick { width: 50px; height: 15px; padding-top: 1px; }
.pick select { flex: 1; min-width: 0; padding-left: 2px; }

main { display: flex; flex: 1; min-height: 0; }
aside { display: flex; flex-direction: column; flex: none; min-height: 0; background: #3b4454; }
aside header { display: flex; justify-content: space-between; align-items: center; flex: none; height: 13px; padding: 0 2px; background: #212832; }
.browser { width: 186px; border-right: 2px solid #465468; }
.tools { display: flex; align-items: center; flex: none; gap: 1px; height: 15px; background: #191f28; }
.tools button { display: grid; place-items: center; width: 15px; height: 15px; }
.tools .sel { background: #343d4d; width: 16px; }
.search { display: flex; align-items: center; flex: none; gap: 6px; height: 16px; margin: 6px 7px 5px 6px; padding: 0 5px; background: #2b323e; }
.search input { flex: 1; min-width: 0; outline: 0; }
.search input::placeholder { color: #949ba6; }
.treebox { display: flex; flex: 1; min-height: 0; overflow: hidden; border-bottom: 2px solid #333c4a; }
.tree { flex: 1; min-width: 0; overflow: hidden; display: grid; grid-auto-rows: minmax(13px, 1fr); height: calc(100% + 5px); }
.tree li { display: flex; align-items: center; white-space: nowrap; overflow: hidden; padding-left: 6px; }
.tree b { flex: none; width: 8px; margin-right: 4px; font: 11px/12px "Liberation Sans", sans-serif; text-align: center; color: #b4bbc6; }
.tree svg { margin-right: 2px; width: 11px; height: 11px; }
.tree .root { padding-left: 3px; }
.tree .root svg { margin-right: 3px; }
.tree i { align-self: stretch; flex: none; width: 8px; border-left: 1px dotted #5b6677; background: linear-gradient(#566172, #566172) 0 50% / 100% 1px no-repeat; opacity: .5; }
.tree .in { margin: 0 4px 0 3px; width: 16px; }
.tree .sub { margin-left: 3px; width: 7px; }
.tree .deep { margin: 0 4px 0 14px; width: 16px; }
.tree .end { border-image: linear-gradient(#5b6677 50%, transparent 50%) 1; }
.hot { background: #333b48; }
.vbar { display: flex; flex-direction: column; align-items: center; justify-content: space-between; flex: none; width: 13px; padding: 2px 0; background: #323a48; }
.track { flex: 1; }
.vbar .track span { display: block; width: 5px; border-radius: 3px; background: #71819b; }
.browser .track { padding: 4px 0; }
.browser .track span { height: 48%; }

.view { display: flex; flex-direction: column; flex: 1; min-width: 0; background: #3b4454; }
.view header { display: flex; align-items: center; justify-content: space-between; flex: none; height: 15px; padding-right: 3px; background: #465064; border-bottom: 1px solid #2d3541; }
.doc { display: flex; align-items: center; gap: 5px; align-self: stretch; width: 85px; padding: 0 3px; background: #232a35; color: #fff; }
.doc .close { margin-left: auto; }
.stage { display: flex; flex: 1; min-height: 0; }
.scene { flex: 1; min-width: 0; width: auto; height: 100%; }
.compass { fill: #d6d0cb; font: bold 9px Roboto, sans-serif; text-anchor: middle; }
.top { fill: #5f5650; font: 5px Roboto, sans-serif; text-anchor: middle; }
.view .vbar .track { display: flex; align-items: center; }
.view .vbar .track span { height: 12px; }
.view footer { display: flex; align-items: center; flex: none; height: 14px; border-bottom: 2px solid #333c4a; }
.scale { width: 50px; font-weight: 500; }
.vc { display: flex; gap: 5px; padding-left: 2px; }
.hbar { display: flex; align-items: center; align-self: stretch; flex: 1; margin-left: 3px; padding: 0 14px 0 0; background: #323a48; }
.hbar .track { display: flex; justify-content: center; }
.hbar .track span { width: 12px; height: 5px; border-radius: 3px; background: #71819b; }

.props { width: 200px; border-left: 2px solid #2b3340; }
.props header { padding-right: 0; }
.type { display: flex; align-items: center; flex: none; height: 46px; padding: 0 3px; gap: 4px; line-height: 11px; }
.type p { flex: 1; }
.thumb { width: 43px; height: 43px; }
.inst { display: flex; align-items: center; flex: none; gap: 4px; height: 16px; padding: 0 3px 0 1px; white-space: nowrap; }
.inst .pick { flex: 1; height: 16px; }
.inst button { display: flex; align-items: center; gap: 3px; }
table { width: 100%; table-layout: fixed; border-collapse: collapse; margin-top: 3px; }
.c-name { width: 96px; }
.c-btn { width: 8px; }
th, td { height: 13px; padding: 0 0 0 2px; line-height: 12px; text-align: left; font-weight: 400; white-space: nowrap; border: 1px solid #465061; border-width: 0 1px 1px 0; }
th { padding-left: 6px; }
td:last-child { padding: 0; }
.h th, .h td { height: 11px; line-height: 11px; padding-left: 2px; background: #212832; color: #e9ecf0; font-weight: 700; border: 0; }
.h td:last-child { padding: 0; }
.off { color: #838b98; }
td.edit { border: 1px solid #b8b5ab; }
td input { display: block; }
.props footer { display: flex; align-items: center; gap: 3px; flex: none; height: 18px; margin-top: auto; padding: 0 2px; background: #333b49; border-bottom: 2px solid #2e3642; }
.sort { display: flex; align-items: center; justify-content: center; width: 13px; height: 14px; background: #3b4454; }
.sort span { font-size: 6px; line-height: 6px; color: #8fc3e8; }
.sort.on { background: #2c7398; }
.apply { width: 44px; height: 12px; margin-left: auto; border: 1px solid #4d5664; border-radius: 2px; color: #7f8793; line-height: 10px; }

.status { display: flex; align-items: flex-start; flex: none; height: 11px; padding-top: 1px; overflow: hidden; white-space: nowrap; background: #3b4454; }
.msg { width: 364px; padding-left: 1px; }
.sets, .picks, .cnt { display: flex; align-items: center; }
.sets { flex: 1; color: #7f8894; gap: 5px; }
.work { margin-right: 127px; }
.sets .cnt { width: 26px; margin-left: 2px; }
.base { width: 122px; }
.picks { gap: 5px; padding-right: 40px; }
```
